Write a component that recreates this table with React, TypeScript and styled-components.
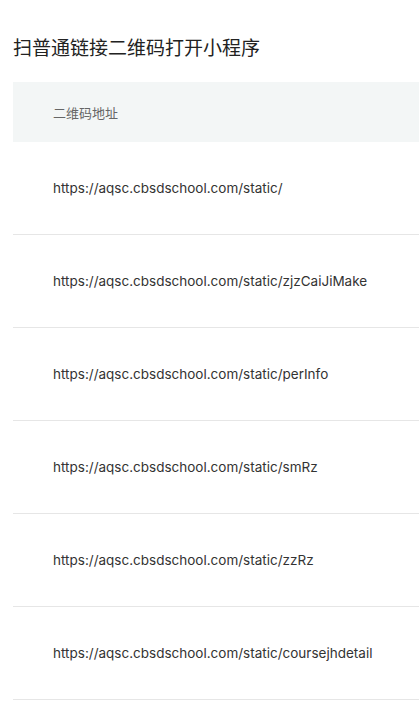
import React from "react";
import styled, { createGlobalStyle } from "styled-components";

const Global = createGlobalStyle`
  html, body { margin: 0; padding: 0; background: #fff; overflow: hidden; }
  body { font-family: Inter, "Noto Sans CJK SC", sans-serif; }
`;

const Page = styled.div`
  padding: 35px 0 0 13px;
  width: 419px;
  box-sizing: border-box;
  overflow: hidden;
`;

const Title = styled.h1`
  margin: 0 0 23px;
  font-size: 19px;
  line-height: 24px;
  font-weight: 400;
  color: #222;
  font-family: "Noto Sans CJK SC", sans-serif;
  white-space: nowrap;
`;

const Table = styled.div`
  width: 600px;
  display: flex;
  flex-direction: column;
`;

const HeadRow = styled.div`
  height: 60px;
  display: flex;
  align-items: center;
  padding-left: 40px;
  background: #f3f6f6;
  font-family: "Noto Sans CJK SC", sans-serif;
  font-size: 13px;
  color: #666;
`;

const Row = styled.div`
  height: 92px;
  display: flex;
  align-items: center;
  padding-left: 40px;
  border-bottom: 1px solid #e6e6e6;
  font-family: Inter, sans-serif;
  font-size: 13.5px;
  color: #333;
  white-space: nowrap;
`;

const urls = [
  "https://aqsc.cbsdschool.com/static/",
  "https://aqsc.cbsdschool.com/static/zjzCaiJiMake",
  "https://aqsc.cbsdschool.com/static/perInfo",
  "https://aqsc.cbsdschool.com/static/smRz",
  "https://aqsc.cbsdschool.com/static/zzRz",
  "https://aqsc.cbsdschool.com/static/coursejhdetail",
];

export default function App() {
  return (
    <Page>
      <Global />
      <Title>扫普通链接二维码打开小程序</Title>
      <Table>
        <HeadRow>二维码地址</HeadRow>
        {urls.map((u) => (
          <Row key={u}>{u}</Row>
        ))}
      </Table>
    </Page>
  );
}
